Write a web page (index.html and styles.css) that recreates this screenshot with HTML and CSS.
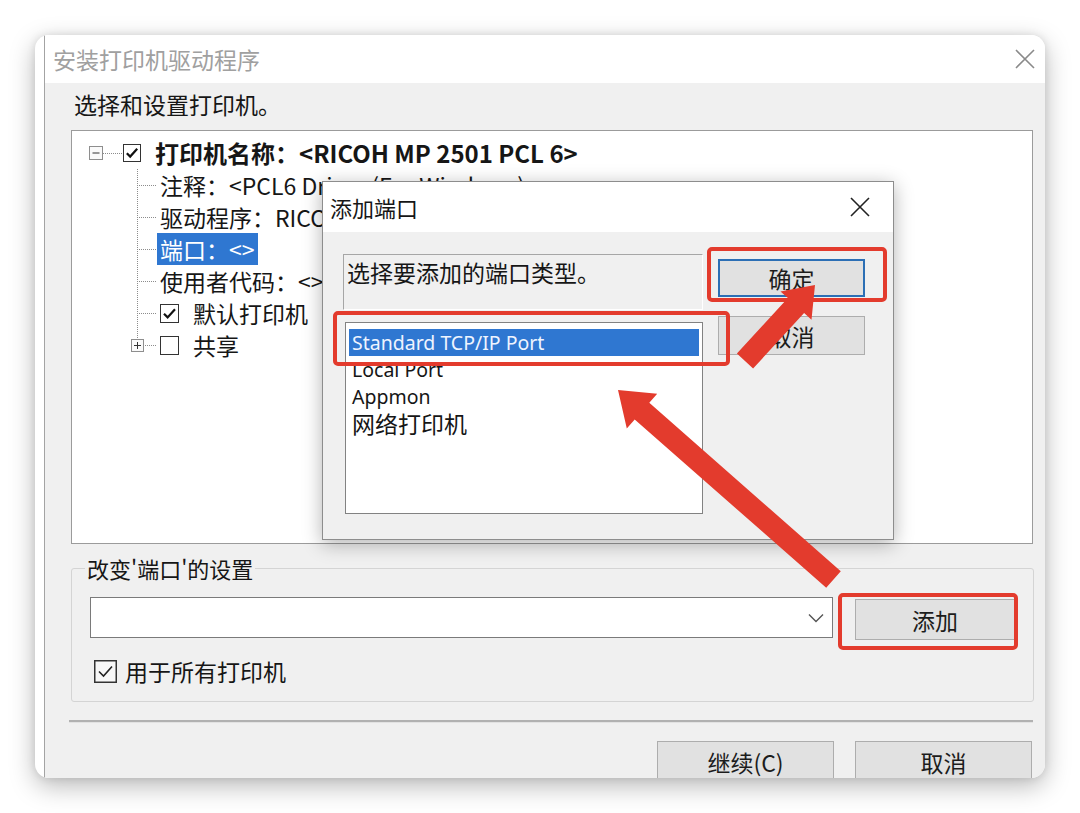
FILE: index.html
```html
<!DOCTYPE html>
<html lang="zh-CN">
<head>
<meta charset="utf-8">
<title>安装打印机驱动程序</title>
<link rel="stylesheet" href="styles.css">
</head>
<body>
<div class="card">
  <div class="window">
    <div class="titlebar">
      <span class="title">安装打印机驱动程序</span>
      <svg class="close" width="20" height="20" viewBox="0 0 20 20"><path d="M1 1L19 19M19 1L1 19" stroke="#8a8a8a" stroke-width="1.6" fill="none"/></svg>
    </div>
    <div class="body">
      <div class="heading">选择和设置打印机。</div>
      <div class="tree">
        <div class="row">
          <svg class="exp" width="14" height="14" viewBox="0 0 14 14"><rect x="0.5" y="0.5" width="13" height="13" fill="#fafafa" stroke="#8e8e8e"/><path d="M3.5 7H10.5" stroke="#333"/></svg>
          <span class="hconn"></span>
          <svg class="cb" width="18" height="18" viewBox="0 0 18 18"><rect x="0.5" y="0.5" width="17" height="17" fill="#fff" stroke="#333"/><path d="M3.8 9.2L7.2 12.6L14.2 4.8" stroke="#111" stroke-width="2.2" fill="none"/></svg>
          <span class="rtext root">打印机名称：&lt;RICOH MP 2501 PCL 6&gt;</span>
        </div>
        <div class="children">
          <div class="row"><span class="gut"></span><span class="rtext">注释：&lt;PCL6 Driver (For Windows)&gt;</span></div>
          <div class="row"><span class="gut"></span><span class="rtext">驱动程序：RICOH MP 2501 PCL 6</span></div>
          <div class="row"><span class="gut"></span><span class="rtext sel">端口：&lt;&gt;</span></div>
          <div class="row"><span class="gut"></span><span class="rtext">使用者代码：&lt;&gt;</span></div>
          <div class="row"><span class="gut"></span>
            <svg class="cb cb-child" width="19" height="19" viewBox="0 0 19 19"><rect x="0.5" y="0.5" width="18" height="18" fill="#fff" stroke="#333"/><path d="M4 9.8L7.6 13.4L15 5.2" stroke="#111" stroke-width="2.2" fill="none"/></svg>
            <span class="rtext after-cb">默认打印机</span></div>
          <div class="row"><span class="gut last"><svg class="exp exp-plus" width="13" height="13" viewBox="0 0 13 13"><rect x="0.5" y="0.5" width="12" height="12" fill="#fafafa" stroke="#8e8e8e"/><path d="M3 6.5H10M6.5 3V10" stroke="#333"/></svg></span>
            <svg class="cb cb-child" width="19" height="19" viewBox="0 0 19 19"><rect x="0.5" y="0.5" width="18" height="18" fill="#fff" stroke="#333"/></svg>
            <span class="rtext after-cb">共享</span></div>
        </div>
      </div>
      <fieldset class="group">
        <legend>改变'端口'的设置</legend>
        <div class="grouprow">
          <div class="combo">
            <svg class="chev" width="16" height="10" viewBox="0 0 16 10"><path d="M1 1.5L8 8.5L15 1.5" stroke="#555" stroke-width="1.4" fill="none"/></svg>
          </div>
          <div class="btn btn-add">添加</div>
        </div>
        <div class="cbrow">
          <svg class="cb" width="23" height="23" viewBox="0 0 23 23"><rect x="0.75" y="0.75" width="21.5" height="21.5" fill="#f7f7f7" stroke="#333" stroke-width="1.5"/><path d="M5 11.5L9.5 16L18 6.5" stroke="#222" stroke-width="1.6" fill="none"/></svg>
          <span class="cbtext">用于所有打印机</span>
        </div>
      </fieldset>
      <div class="sep"></div>
      <div class="footer">
        <div class="btn btn-foot">继续(C)</div>
        <div class="btn btn-foot">取消</div>
      </div>
    </div>
  </div>

  <div class="dialog">
    <div class="dlg-title">
      <span>添加端口</span>
      <svg width="20" height="20" viewBox="0 0 20 20"><path d="M1 1L19 19M19 1L1 19" stroke="#222" stroke-width="1.6" fill="none"/></svg>
    </div>
    <div class="dlg-body">
      <div class="dlg-left">
        <div class="labelbox">选择要添加的端口类型。</div>
        <div class="listbox">
          <div class="item sel">Standard TCP/IP Port</div>
          <div class="item">Local Port</div>
          <div class="item">Appmon</div>
          <div class="item cjk">网络打印机</div>
        </div>
      </div>
      <div class="dlg-right">
        <div class="btn btn-ok">确定</div>
        <div class="btn btn-cancel">取消</div>
      </div>
    </div>
  </div>

  <svg class="overlay" width="1010" height="743" viewBox="0 0 1010 743">
    <g fill="none" stroke="#e33b2d" stroke-width="4">
      <rect x="674" y="214" width="176" height="51" rx="3"/>
      <rect x="300" y="278" width="393" height="51" rx="3"/>
      <rect x="805" y="560" width="176" height="53" rx="3"/>
    </g>
    <g fill="#e33b2d">
      <polygon points="701.9,318.5 752.9,263.1 745.5,256.4 780,250 776.5,284.8 769.1,278.1 718.1,333.5"/>
      <polygon points="805.8,536.2 614.3,367.8 622.2,358.8 583,355 591.8,393.4 599.7,384.4 791.2,552.8"/>
    </g>
  </svg>
</div>
</body>
</html>
```

FILE: styles.css
```css
* { box-sizing: border-box; }
html, body { margin: 0; padding: 0; }
body {
  background: #fff;
  width: 1080px;
  height: 813px;
  overflow: hidden;
  font-family: "Noto Sans CJK SC", "Noto Sans", sans-serif;
  color: #161616;
}
.card {
  position: relative;
  margin: 35px 0 0 35px;
  width: 1010px;
  height: 743px;
  border-radius: 14px;
  overflow: hidden;
  background: #fff;
  box-shadow: 0 8px 26px rgba(0,0,0,0.28), 0 0 8px rgba(0,0,0,0.10);
}
.window {
  margin-left: 9px;
  height: 100%;
  border-left: 1px solid #a3a3a3;
  display: flex;
  flex-direction: column;
}
.titlebar {
  height: 48px;
  flex: none;
  background: #fff;
  display: flex;
  align-items: center;
  justify-content: space-between;
  padding: 0 10px 0 8px;
}
.title { font-size: 23px; line-height: 30px; color: #a0a0a0; }
.close { display: block; }
.body {
  flex: 1;
  min-height: 0;
  background: #f0f0f0;
  padding: 6px 12px 0 26px;
  display: flex;
  flex-direction: column;
}
.heading { height: 30px; line-height: 30px; font-size: 23px; padding-left: 3px; margin-bottom: 11px; flex: none; }
.tree {
  height: 414px;
  flex: none;
  background: #fff;
  border: 1px solid #9b9b9b;
  padding: 6px 0 0 17px;
  font-size: 23px;
  line-height: 32px;
}
.row { display: flex; align-items: center; height: 32px; white-space: nowrap; }
.exp { display: block; flex: none; }
.hconn {
  width: 20px; height: 1px; flex: none;
  background: repeating-linear-gradient(to right, #8c8c8c 0 1px, transparent 1px 2px);
}
.cb { display: block; flex: none; }
.rtext { padding: 0 3px; height: 32px; line-height: 32px; }
.rtext.root { font-weight: 700; font-size: 24px; margin-left: 11px; }
.rtext.sel { background: #2f77d1; color: #fff; }
.rtext.after-cb { margin-left: 11px; }
.children { margin-left: 48px; }
.gut {
  width: 20px; height: 32px; flex: none;
  display: flex; align-items: center;
  background-image:
    repeating-linear-gradient(to bottom, #8c8c8c 0 1px, transparent 1px 2px),
    repeating-linear-gradient(to right, #8c8c8c 0 1px, transparent 1px 2px);
  background-size: 1px 100%, 100% 1px;
  background-position: 0 0, 0 16px;
  background-repeat: no-repeat;
}
.gut.last { background-size: 1px 16px, 100% 1px; }
.exp-plus { margin-left: -6px; }
.cb-child { margin-left: 3px; }

.group {
  margin: 9px 0 0 0;
  padding: 0 18px 15px 18px;
  border: 1px solid #d4d4d4;
  border-radius: 3px;
  flex: none;
}
.group legend {
  margin-left: -5px;
  padding: 0 2px;
  font-size: 22px;
  line-height: 30px;
}
.grouprow { display: flex; align-items: flex-start; margin-top: 14px; }
.combo {
  width: 743px; height: 41px;
  background: #fff;
  border: 1px solid #7a7a7a;
  display: flex; align-items: center; justify-content: flex-end;
  padding-right: 8px;
}
.chev { display: block; }
.btn {
  background: #e1e1e1;
  border: 1px solid #adadad;
  display: flex; align-items: center; justify-content: center;
  font-size: 23px;
  color: #1c1c1c;
}
.btn-add { width: 160px; height: 41px; margin: 2px 0 0 22px; }
.cbrow { display: flex; align-items: center; height: 30px; margin-top: 16px; padding-left: 4px; }
.cbtext { font-size: 23px; line-height: 30px; margin-left: 8px; }
.sep {
  height: 3px; flex: none;
  margin: 18px 0 0 -2px;
  background: #b1b1b1;
  border-bottom: 1px solid #e2e2e2;
}
.footer { display: flex; justify-content: flex-end; gap: 21px; margin-top: 18px; flex: none; padding-right: 1px; }
.btn-foot { width: 177px; height: 42px; }

.dialog {
  position: absolute;
  left: 287px; top: 146px;
  width: 572px; height: 359px;
  border: 1px solid #8d8d8d;
  background: #f0f0f0;
  box-shadow: 0 4px 18px rgba(0,0,0,0.30);
  display: flex; flex-direction: column;
}
.dlg-title {
  height: 50px; flex: none;
  background: #fff;
  display: flex; align-items: center; justify-content: space-between;
  padding: 0 23px 0 7px;
  font-size: 22px; line-height: 30px;
}
.dlg-title svg { display: block; }
.dlg-body { display: flex; padding: 22px 0 0 20px; }
.dlg-left { width: 360px; flex: none; }
.labelbox {
  height: 56px;
  border-top: 1px solid #a6a6a6;
  border-left: 1px solid #a6a6a6;
  border-right: 1px solid #fff;
  border-bottom: 1px solid #fff;
  font-size: 23px; line-height: 30px;
  padding: 2px 0 0 3px;
  white-space: nowrap;
}
.listbox {
  margin: 12px 0 0 2px;
  width: 358px; height: 192px;
  background: #fff;
  border: 1px solid #828282;
  padding: 6px 3px;
}
.item {
  height: 27px; line-height: 27px;
  padding-left: 3px;
  font-family: "Noto Sans", "Open Sans", sans-serif;
  font-size: 19.5px;
  white-space: nowrap;
}
.item.sel { background: #2f77d1; color: #eef4ff; }
.item.cjk { font-family: "Noto Sans CJK SC", sans-serif; font-size: 23px; }
.dlg-right { margin-left: 15px; padding-top: 5px; display: flex; flex-direction: column; gap: 19px; }
.btn-ok { width: 147px; height: 38px; border: 2px solid #2c6fb5; }
.btn-cancel { width: 147px; height: 39px; }

.overlay { position: absolute; left: 0; top: 0; pointer-events: none; }
```
